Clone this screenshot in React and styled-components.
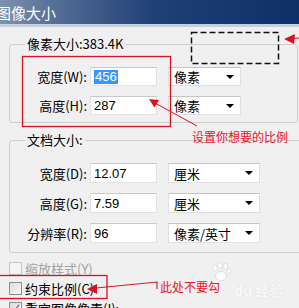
import React from 'react'
import styled, { createGlobalStyle } from 'styled-components'

const GlobalStyle = createGlobalStyle`
  html, body {
    margin: 0;
    padding: 0;
  }

  body {
    background: #f0f0f0;
    font-family: "Noto Sans CJK SC", "Liberation Sans", sans-serif;
    overflow: hidden;
  }
`

const Dialog = styled.div`
  position: relative;
  width: 299px;
  height: 308px;
  overflow: hidden;
  background: #f0f0f0;
`

const TitleBar = styled.div`
  height: 24px;
  display: flex;
  align-items: center;
  background: linear-gradient(to right, #7f92ae 0%, #4d6892 22%, #1f3f77 52%, #0f2f69 100%);
  border-bottom: 3px solid #c6d0dd;
`

const Title = styled.span`
  margin-left: -4px;
  color: #fff;
  font-size: 15px;
  line-height: 1;
`

const Content = styled.div`
  display: flex;
  flex-direction: column;
  padding: 9px 0 0 9px;
`

const Group = styled.fieldset`
  margin: ${p => p.$gap || 0}px 0 0 0;
  padding: 15px 0 ${p => p.$bottom}px 0;
  width: ${p => p.$width}px;
  box-sizing: border-box;
  border: 1px solid #cdcdcd;
  border-radius: 3px;
  min-width: 0;
`

const Legend = styled.legend`
  margin-left: 15px;
  padding: 0 2px;
  font-size: 13px;
  line-height: 16px;
  color: #000;
`

const Rows = styled.div`
  display: flex;
  flex-direction: column;
  gap: ${p => p.$gap}px;
`

const Row = styled.div`
  display: flex;
  align-items: center;
  height: ${p => p.$h}px;
`

const Label = styled.span`
  width: 77px;
  text-align: right;
  font-size: 13px;
  color: #000;
  white-space: nowrap;
`

const Field = styled.div`
  margin-left: 3px;
  width: 67px;
  height: 100%;
  box-sizing: border-box;
  display: flex;
  align-items: center;
  padding-left: 3px;
  background: #fff;
  border: 1px solid #e2e2e2;
  border-top-color: #c9c9c9;
  font-family: "Liberation Sans", sans-serif;
  font-size: 13px;
  color: #000;
`

const Picked = styled.span`
  background: #3399ff;
  color: #fff;
  line-height: 14px;
  padding: 0 1px;
`

const Select = styled.div`
  margin-left: 11px;
  width: ${p => (p.$wide ? 92 : 73)}px;
  height: 100%;
  box-sizing: border-box;
  display: flex;
  align-items: center;
  justify-content: space-between;
  padding: 0 5px 0 5px;
  background: #fff;
  border: 1px solid #e0e0e0;
  border-top-color: #c4c4c4;
  font-size: 13px;
  color: #000;
`

const Caret = styled.span`
  width: 0;
  height: 0;
  border-left: 4px solid transparent;
  border-right: 4px solid transparent;
  border-top: 4px solid #000;
  margin-right: 1px;
`

const Checks = styled.div`
  display: flex;
  flex-direction: column;
  margin-top: 5px;
`

const CheckRow = styled.div`
  display: flex;
  align-items: center;
  height: 20px;
  gap: 3px;
  font-size: 13px;
  white-space: nowrap;
  color: ${p => (p.$disabled ? '#a3a3a3' : '#000')};
`

const Box = styled.span`
  width: 13px;
  height: 13px;
  box-sizing: border-box;
  border: 1px solid ${p => (p.$disabled ? '#c7c7c7' : '#8e8f8f')};
  background: ${p => (p.$disabled ? '#f4f4f4' : 'linear-gradient(135deg, #dcdcdc, #fafafa)')};
  display: flex;
  align-items: center;
  justify-content: center;
  font-size: 11px;
  line-height: 1;
  color: #1f3a6e;
`

const Note = styled.span`
  position: absolute;
  left: ${p => p.$x}px;
  top: ${p => p.$y}px;
  font-size: 12px;
  line-height: 14px;
  color: #e3202b;
  text-shadow: 0 0 1px #ffd9dc;
  white-space: nowrap;
`

const Watermark = styled.div`
  position: absolute;
  left: 210px;
  top: 262px;
  display: flex;
  align-items: flex-end;
  gap: 2px;
  pointer-events: none;
`

const MarkText = styled.span`
  margin-bottom: -16px;
  color: rgba(255, 255, 255, 0.9);
  text-shadow: 0 0 1px #cfcfcf;
  font-family: "Noto Sans CJK SC", "Liberation Sans", sans-serif;
  font-size: 14px;
  font-weight: bold;
  line-height: 16px;
  white-space: nowrap;
`

const Overlay = styled.svg`
  position: absolute;
  left: 0;
  top: 0;
  width: 299px;
  height: 308px;
  pointer-events: none;
`

const RED = '#d8131f'

const Annotations = () => (
  <Overlay viewBox="0 0 299 308">
    <rect x="22.5" y="56.5" width="148" height="70" fill="none" stroke={RED} strokeWidth="1.3" />
    <rect x="-1" y="275.5" width="108" height="23" fill="none" stroke={RED} strokeWidth="1.3" />
    <rect x="191.5" y="32.5" width="87" height="31" fill="none" stroke="#111" strokeWidth="1.5" strokeDasharray="6 3" />

    <line x1="197" y1="126" x2="155" y2="103" stroke={RED} strokeWidth="1" />
    <polygon points="149,99 159,100 154.5,107.5" fill={RED} />

    <line x1="299" y1="38" x2="292" y2="38.5" stroke={RED} strokeWidth="1.2" />
    <polygon points="284,39 295,34 294,44" fill={RED} />

    <polyline points="96,288 157,282 157,289" fill="none" stroke={RED} strokeWidth="1.1" />
    <polygon points="87,289 97,284 97,294" fill={RED} />
  </Overlay>
)

const Paw = () => (
  <svg width="22" height="20" viewBox="0 0 22 20">
    <g fill="#fff" stroke="#d6d6d6" strokeWidth="0.8">
      <ellipse cx="5" cy="6" rx="2.4" ry="3" />
      <ellipse cx="10" cy="3.5" rx="2.4" ry="3" />
      <ellipse cx="15.5" cy="4.5" rx="2.4" ry="3" />
      <ellipse cx="19" cy="9" rx="2" ry="2.6" />
      <ellipse cx="11" cy="14" rx="5.5" ry="4.5" />
    </g>
  </svg>
)

const App = () => (
  <Dialog>
    <GlobalStyle />
    <TitleBar>
      <Title>图像大小</Title>
    </TitleBar>
    <Content>
      <Group $width={289} $bottom={7}>
        <Legend>像素大小:383.4K</Legend>
        <Rows $gap={10}>
          <Row $h={19}>
            <Label>宽度(W):</Label>
            <Field><Picked>456</Picked></Field>
            <Select>像素<Caret /></Select>
          </Row>
          <Row $h={19}>
            <Label>高度(H):</Label>
            <Field>287</Field>
            <Select>像素<Caret /></Select>
          </Row>
        </Rows>
      </Group>

      <Group $width={310} $gap={9} $bottom={9}>
        <Legend>文档大小:</Legend>
        <Rows $gap={10}>
          <Row $h={20}>
            <Label>宽度(D):</Label>
            <Field>12.07</Field>
            <Select $wide>厘米<Caret /></Select>
          </Row>
          <Row $h={20}>
            <Label>高度(G):</Label>
            <Field>7.59</Field>
            <Select $wide>厘米<Caret /></Select>
          </Row>
          <Row $h={20}>
            <Label>分辨率(R):</Label>
            <Field>96</Field>
            <Select $wide>像素/英寸<Caret /></Select>
          </Row>
        </Rows>
      </Group>

      <Checks>
        <CheckRow $disabled>
          <Box $disabled />
          缩放样式(Y)
        </CheckRow>
        <CheckRow>
          <Box />
          约束比例(C)
        </CheckRow>
        <CheckRow>
          <Box>✓</Box>
          重定图像像素(I):
        </CheckRow>
      </Checks>
    </Content>

    <Watermark>
      <Paw />
      <MarkText>du 经验</MarkText>
    </Watermark>

    <Annotations />
    <Note $x={192} $y={130}>设置你想要的比例</Note>
    <Note $x={160} $y={280}>此处不要勾</Note>
  </Dialog>
)

export default App
